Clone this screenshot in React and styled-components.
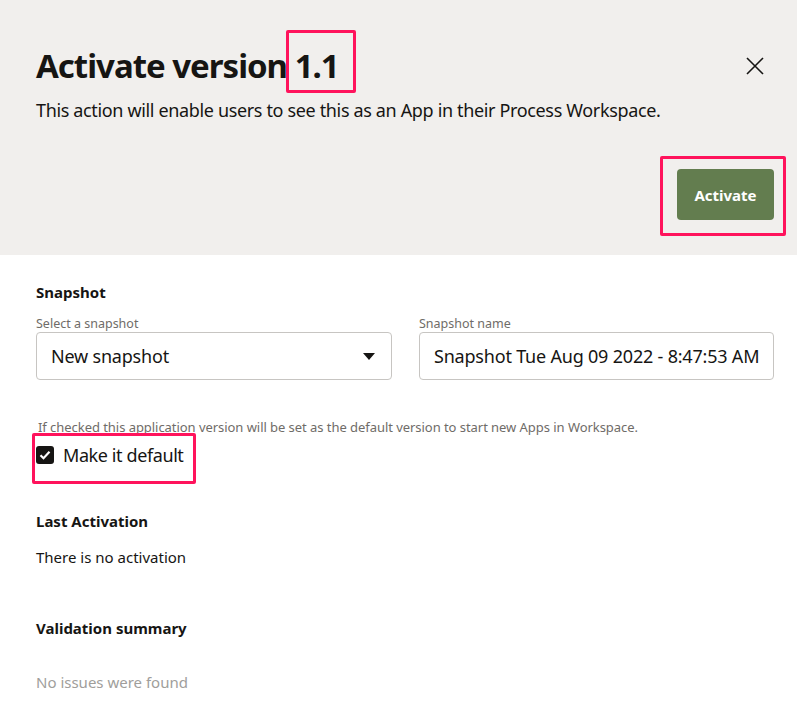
import React from 'react';
import styled, { createGlobalStyle } from 'styled-components';

const GlobalStyle = createGlobalStyle`
  body {
    margin: 0;
    background: #ffffff;
    font-family: 'Noto Sans', 'Open Sans', sans-serif;
    color: #161513;
  }
`;

const Dialog = styled.div`
  width: 797px;
  height: 724px;
  overflow: hidden;
  background: #ffffff;
`;

const Header = styled.header`
  height: 255px;
  box-sizing: border-box;
  padding: 44px 23px 0 36px;
  background: #f1efed;
`;

const TitleRow = styled.div`
  display: flex;
  align-items: center;
  justify-content: space-between;
`;

const Title = styled.h1`
  margin: 0;
  font-size: 33px;
  line-height: 44px;
  font-weight: 700;
  letter-spacing: -1px;
`;

const Mark = styled.span`
  position: relative;
  display: ${(p) => (p.$block ? 'flex' : 'inline-block')};
  width: fit-content;

  &::after {
    content: '';
    position: absolute;
    left: ${(p) => p.$l}px;
    right: ${(p) => p.$r}px;
    top: ${(p) => p.$t}px;
    bottom: ${(p) => p.$b}px;
    border: 3px solid #ff135c;
    border-radius: 2px;
    pointer-events: none;
  }
`;

const CloseButton = styled.button`
  display: flex;
  align-items: center;
  justify-content: center;
  width: 28px;
  height: 28px;
  margin-right: 5px;
  padding: 0;
  border: none;
  background: transparent;
  cursor: pointer;
  color: #161513;
`;

const Subtitle = styled.p`
  margin: 10px 0 0;
  font-size: 18px;
  line-height: 24px;
  letter-spacing: -0.35px;
`;

const Actions = styled.div`
  display: flex;
  justify-content: flex-end;
  margin-top: 47px;
`;

const PrimaryButton = styled.button`
  width: 97px;
  height: 51px;
  border: none;
  border-radius: 4px;
  background: #637d4f;
  color: #ffffff;
  font-family: inherit;
  font-size: 15px;
  font-weight: 700;
  cursor: pointer;
`;

const Body = styled.main`
  padding: 26px 24px 0 36px;
`;

const SectionTitle = styled.h2`
  margin: 0;
  font-size: 15px;
  line-height: 22px;
  font-weight: 700;
`;

const FieldRow = styled.div`
  display: grid;
  grid-template-columns: 356px 355px;
  column-gap: 27px;
  margin-top: 9px;
`;

const Field = styled.label`
  display: flex;
  flex-direction: column;
`;

const FieldLabel = styled.span`
  margin-top: 4px;
  font-size: 12.5px;
  line-height: 16px;
  color: #6f6c68;
`;

const Control = styled.div`
  display: flex;
  align-items: center;
  justify-content: space-between;
  height: 48px;
  box-sizing: border-box;
  padding: 0 16px 0 14px;
  border: 1px solid #c7c5c2;
  border-radius: 4px;
  background: #ffffff;
  font-size: 18px;
  letter-spacing: -0.2px;
  white-space: nowrap;
`;

const Helper = styled.p`
  margin: 38px 0 0 2px;
  font-size: 13px;
  line-height: 18px;
  letter-spacing: -0.05px;
  color: #6f6c68;
`;

const CheckRow = styled.label`
  display: flex;
  align-items: center;
  gap: 9px;
  margin-top: 7px;
  font-size: 18px;
  line-height: 24px;
  letter-spacing: -0.4px;
`;

const Box = styled.span`
  display: flex;
  align-items: center;
  justify-content: center;
  width: 18px;
  height: 18px;
  border-radius: 3px;
  background: #161513;
`;

const Section = styled.section`
  margin-top: ${(p) => p.$gap}px;
`;

const Text = styled.p`
  margin: ${(p) => p.$gap}px 0 0;
  font-size: 15px;
  line-height: 22px;
  color: ${(p) => (p.$muted ? '#a09e9b' : '#161513')};
`;

const Caret = () => (
  <svg width="12" height="7" viewBox="0 0 12 7">
    <path d="M0 0h12L6 7z" fill="#161513" />
  </svg>
);

export default function App() {
  return (
    <Dialog>
      <GlobalStyle />
      <Header>
        <TitleRow>
          <Title>
            Activate version{' '}
            <Mark $l={-9} $r={-17} $t={-14} $b={-5}>1.1</Mark>
          </Title>
          <CloseButton aria-label="Close">
            <svg width="18" height="18" viewBox="0 0 18 18">
              <path d="M1 1l16 16M17 1L1 17" stroke="#161513" strokeWidth="1.6" />
            </svg>
          </CloseButton>
        </TitleRow>
        <Subtitle>
          This action will enable users to see this as an App in their Process Workspace.
        </Subtitle>
        <Actions>
          <Mark $l={-17} $r={-12} $t={-13} $b={-16}>
            <PrimaryButton>Activate</PrimaryButton>
          </Mark>
        </Actions>
      </Header>
      <Body>
        <SectionTitle>Snapshot</SectionTitle>
        <FieldRow>
          <Field>
            <FieldLabel>Select a snapshot</FieldLabel>
            <Control>
              New snapshot
              <Caret />
            </Control>
          </Field>
          <Field>
            <FieldLabel>Snapshot name</FieldLabel>
            <Control>Snapshot Tue Aug 09 2022 - 8:47:53 AM</Control>
          </Field>
        </FieldRow>
        <Helper>
          If checked this application version will be set as the default version to start new Apps in Workspace.
        </Helper>
        <Mark $block $l={-4} $r={-13} $t={-3} $b={-17}>
          <CheckRow>
            <Box>
              <svg width="12" height="10" viewBox="0 0 12 10">
                <path d="M1.5 5.2l3 3L10.5 1.8" fill="none" stroke="#fff" strokeWidth="2.2" />
              </svg>
            </Box>
            Make it default
          </CheckRow>
        </Mark>
        <Section $gap={43}>
          <SectionTitle>Last Activation</SectionTitle>
          <Text $gap={14}>There is no activation</Text>
        </Section>
        <Section $gap={49}>
          <SectionTitle>Validation summary</SectionTitle>
          <Text $gap={32} $muted>No issues were found</Text>
        </Section>
      </Body>
    </Dialog>
  );
}
